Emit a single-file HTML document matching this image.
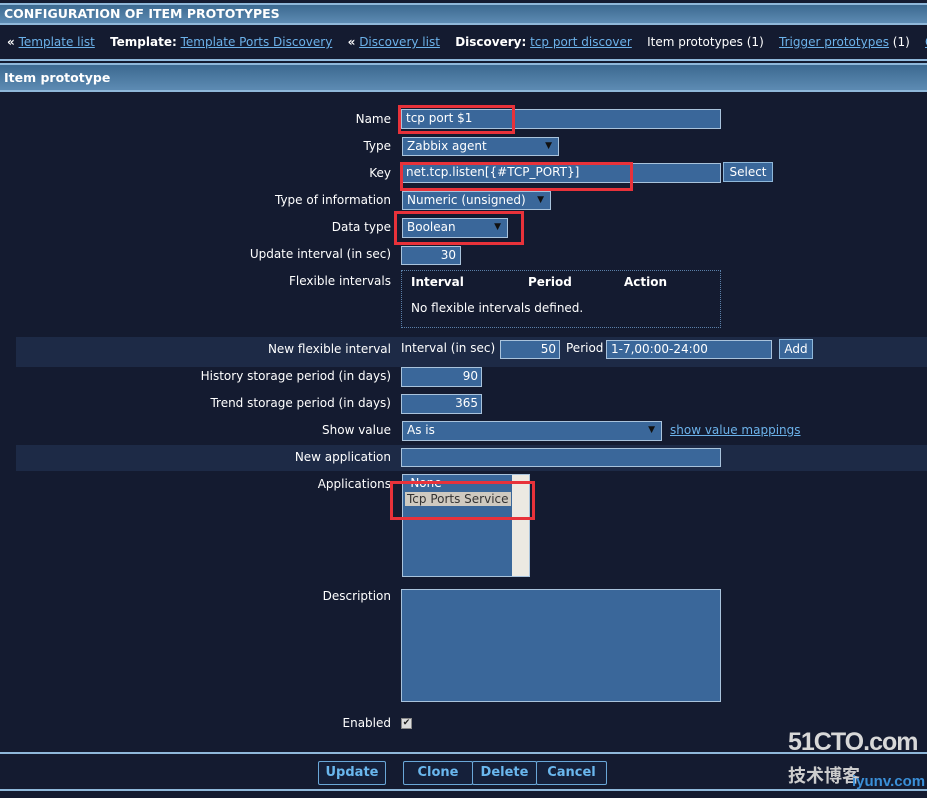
<!DOCTYPE html>
<html><head><meta charset="utf-8"><style>
*{box-sizing:border-box;margin:0;padding:0}
body{width:927px;height:798px;background:#141b30;font-family:"DejaVu Sans","Liberation Sans",sans-serif;font-size:12px;color:#fff;position:relative;overflow:hidden}
.a{position:absolute;white-space:nowrap}
.bar{position:absolute;left:0;width:927px;background:linear-gradient(#3c6990,#5d8bb3);border-top:2px solid #8fb8da;border-bottom:2px solid #8fb8da;font-weight:bold;font-size:12.5px;padding-left:4px;overflow:hidden}
.lbl{position:absolute;right:536px;white-space:nowrap;text-align:right}
.in{position:absolute;background:#3a679a;border:1px solid #a9c3dc;padding-left:4px;line-height:17px;white-space:nowrap;overflow:hidden}
.sel:after{content:"▼";position:absolute;right:6px;top:0;font-size:9px;color:#111}
.btn{position:absolute;border:1px solid #8fb8da;background:#223352;color:#fff;text-align:center;line-height:18px}
.red{position:absolute;border:3px solid #e8323a}
a{color:#6cb2ea;text-decoration:underline}
.b2{position:absolute;border:1px solid #6aa7d8;border-radius:2px;color:#6ab7ee;font-weight:bold;font-size:13px;text-align:center;line-height:22px;background:#15203a}
.band{position:absolute;left:16px;width:911px;background:#1d2a46}
</style></head><body>
<div class="bar" style="top:3px;height:22px;line-height:18px">CONFIGURATION OF ITEM PROTOTYPES</div>
<div class="a" style="top:35px;left:7px;height:18px;width:920px;overflow:hidden"><b>«</b> <a>Template list</a> &nbsp;&nbsp; <b>Template:</b> <a>Template Ports Discovery</a> &nbsp;&nbsp; <b>«</b> <a>Discovery list</a> &nbsp;&nbsp; <b>Discovery:</b> <a>tcp port discover</a> &nbsp;&nbsp; Item prototypes (1) &nbsp;&nbsp; <a>Trigger prototypes</a> (1) &nbsp;&nbsp; <a>Gr</a></div>
<div style="position:absolute;top:59px;left:0;width:927px;height:2px;background:#8fb8da"></div>
<div class="bar" style="top:63px;height:29px;line-height:25px">Item prototype</div>

<div class="lbl" style="top:112px">Name</div>
<div class="in" style="left:401px;top:109px;width:320px;height:20px">tcp port $1</div>
<div class="lbl" style="top:139px">Type</div>
<div class="in sel" style="left:402px;top:137px;width:157px;height:19px">Zabbix agent</div>
<div class="lbl" style="top:166px">Key</div>
<div class="in" style="left:401px;top:163px;width:320px;height:20px">net.tcp.listen[{#TCP_PORT}]</div>
<div class="btn" style="left:723px;top:162px;width:50px;height:20px;background:#3a679a">Select</div>
<div class="lbl" style="top:193px">Type of information</div>
<div class="in sel" style="left:402px;top:191px;width:149px;height:19px">Numeric (unsigned)</div>
<div class="lbl" style="top:220px">Data type</div>
<div class="in sel" style="left:402px;top:218px;width:106px;height:20px">Boolean</div>
<div class="lbl" style="top:247px">Update interval (in sec)</div>
<div class="in" style="left:401px;top:246px;width:60px;height:19px;text-align:right;padding-right:4px">30</div>
<div class="lbl" style="top:274px">Flexible intervals</div>
<div style="position:absolute;left:401px;top:270px;width:320px;height:58px;border:1px dotted #5a7fa8"></div>
<div class="a" style="left:411px;top:275px;font-weight:bold">Interval</div>
<div class="a" style="left:528px;top:275px;font-weight:bold">Period</div>
<div class="a" style="left:624px;top:275px;font-weight:bold">Action</div>
<div class="a" style="left:411px;top:301px">No flexible intervals defined.</div>

<div class="band" style="top:337px;height:30px"></div>
<div class="lbl" style="top:342px">New flexible interval</div>
<div class="a" style="left:401px;top:341px">Interval (in sec)</div>
<div class="in" style="left:500px;top:340px;width:60px;height:19px;text-align:right;padding-right:3px">50</div>
<div class="a" style="left:566px;top:341px">Period</div>
<div class="in" style="left:606px;top:340px;width:166px;height:19px">1-7,00:00-24:00</div>
<div class="btn" style="left:779px;top:339px;width:34px;height:20px;background:#3a679a">Add</div>
<div class="lbl" style="top:369px">History storage period (in days)</div>
<div class="in" style="left:401px;top:367px;width:81px;height:20px;text-align:right;padding-right:3px">90</div>
<div class="lbl" style="top:396px">Trend storage period (in days)</div>
<div class="in" style="left:401px;top:394px;width:81px;height:20px;text-align:right;padding-right:3px">365</div>
<div class="lbl" style="top:423px">Show value</div>
<div class="in sel" style="left:402px;top:421px;width:260px;height:20px">As is</div>
<div class="a" style="left:670px;top:423px"><a>show value mappings</a></div>
<div class="band" style="top:445px;height:26px"></div>
<div class="lbl" style="top:450px">New application</div>
<div class="in" style="left:401px;top:448px;width:320px;height:19px"></div>
<div class="lbl" style="top:477px">Applications</div>
<div class="in" style="left:402px;top:474px;width:128px;height:103px;padding:0"></div>
<div style="position:absolute;left:512px;top:475px;width:17px;height:101px;background:#ece9e2"></div>
<div class="a" style="left:406px;top:476px">-None-</div>
<div class="a" style="left:405px;top:492px;background:#cfcac0;color:#333;padding:0 2px">Tcp Ports Service</div>
<div class="lbl" style="top:589px">Description</div>
<div class="in" style="left:401px;top:589px;width:320px;height:113px"></div>
<div class="lbl" style="top:716px">Enabled</div>
<div style="position:absolute;left:401px;top:718px;width:11px;height:11px;background:#ddd;border:1px solid #888;color:#222;font-size:9px;line-height:9px;text-align:center">✔</div>

<div class="red" style="left:398px;top:105px;width:117px;height:29px"></div>
<div class="red" style="left:400px;top:162px;width:233px;height:29px"></div>
<div class="red" style="left:394px;top:211px;width:130px;height:34px"></div>
<div class="red" style="left:390px;top:481px;width:145px;height:39px"></div>

<div style="position:absolute;top:752px;left:0;width:927px;height:2px;background:#8fb8da"></div>
<div style="position:absolute;top:789px;left:0;width:927px;height:2px;background:#8fb8da"></div>
<div class="b2" style="left:318px;top:761px;width:68px;height:24px">Update</div>
<div class="b2" style="left:403px;top:761px;width:70px;height:24px">Clone</div>
<div class="b2" style="left:472px;top:761px;width:65px;height:24px">Delete</div>
<div class="b2" style="left:536px;top:761px;width:71px;height:24px">Cancel</div>

<div class="a" style="left:788px;top:728px;font:bold 25px 'Liberation Sans',sans-serif;color:#d8d8d8;letter-spacing:-1px">51CTO.com</div>
<div class="a" style="left:788px;top:762px;font:bold 18px 'Liberation Sans','Noto Sans CJK SC',sans-serif;color:#ccc">技术博客</div>
<div class="a" style="left:852px;top:773px;font:bold 15px 'Liberation Sans',sans-serif;color:#3a8fd8">iyunv.com</div>
</body></html>
